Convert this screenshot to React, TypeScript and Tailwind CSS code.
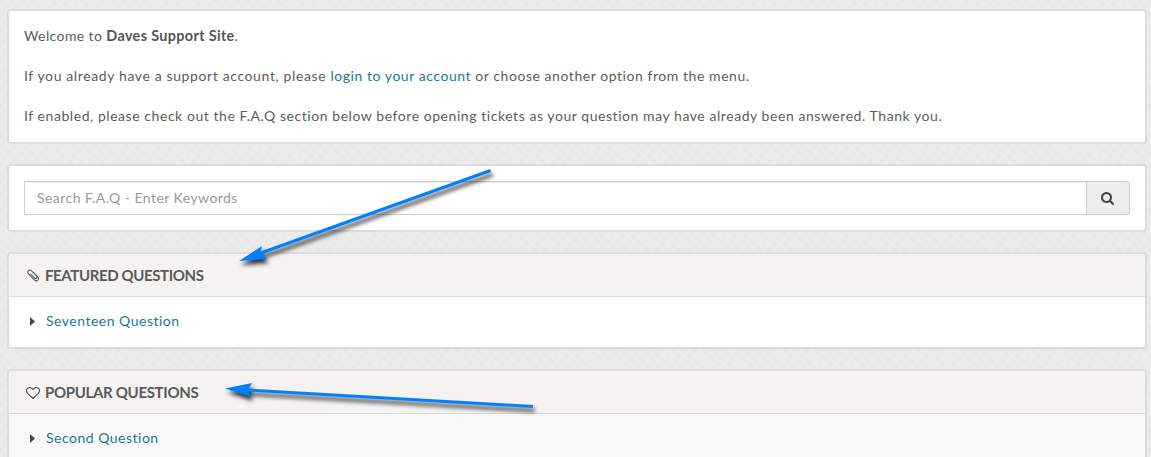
import React from "react";

const panel = "rounded-[4px] border-2 border-[#dcdcdc] bg-white";
const grain =
  "bg-[repeating-linear-gradient(43deg,#ffffff18_0_2px,transparent_4px_7px),repeating-linear-gradient(-53deg,#ffffff18_0_2px,transparent_4px_9px)]";

function Search() {
  return (
    <svg viewBox="0 0 1792 1792" className="-mt-px h-[14px] w-[14px]" fill="#444">
      <path d="M1152 832q0-185-131.5-316.5t-316.5-131.5-316.5 131.5-131.5 316.5 131.5 316.5 316.5 131.5 316.5-131.5 131.5-316.5zm512 832q0 52-38 90t-90 38q-54 0-90-38l-343-342q-179 124-399 124-143 0-273.5-55.5t-225-150-150-225-55.5-273.5 55.5-273.5 150-225 225-150 273.5-55.5 273.5 55.5 225 150 150 225 55.5 273.5q0 220-124 399l343 343q37 37 37 90z" />
    </svg>
  );
}

function Clip() {
  return (
    <svg viewBox="0 0 12 13" className="ml-[2px] mt-px h-[13px] w-[12px]" fill="none" stroke="#555" strokeWidth="1.05" strokeLinecap="round">
      <path d="M5.2 2.3 10.5 7.7C12.7 10.3 10 13.2 7.5 11L1.5 4.9C-.4 2.6 2.2-.2 4.4 1.7L9.4 6.8C10.9 8.6 9 10.3 7.6 9L3.7 5" />
    </svg>
  );
}

function Heart() {
  return (
    <svg viewBox="0 0 14 14" className="ml-px mt-px h-[14px] w-[14px]" fill="none" stroke="#505050" strokeWidth="1.1" strokeLinejoin="round">
      <path d="M7 12.5 1.9 7.6C-.8 4.8.6 1.5 3.8 1.5 5.5 1.5 6.5 2.8 7 3.4 7.5 2.8 8.5 1.5 10.2 1.5 13.4 1.5 14.8 4.8 12.1 7.6Z" />
    </svg>
  );
}

function Section({ icon, title, titleClass, question, body }: {
  icon: React.ReactNode;
  title: string;
  titleClass: string;
  question: string;
  body: string;
}) {
  return (
    <section className={`${panel} mb-[20px] overflow-hidden`}>
      <h2 className="flex h-[43px] items-center border-b border-[#dcdcdc] bg-[#f4f3f2] pl-4 text-[15px] font-bold text-[#5a5a5a]">
        <span className="flex w-5 shrink-0">{icon}</span>
        <span className={titleClass}>{title}</span>
      </h2>
      <div className={`flex h-[50px] items-center pb-px pl-[21px] ${body}`}>
        <svg viewBox="0 0 5 9" className="mr-[11px] h-[9px] w-[5px]" fill="#4c4448"><path d="M0 0 5 4.5 0 9Z" /></svg>
        <a className="-mt-px tracking-[0.5px] text-[#187a94]">{question}</a>
      </div>
    </section>
  );
}

function Arrow({ points, line }: { points: string; line: [number, number, number, number] }) {
  return (
    <g fill="#0080ff" stroke="#0080ff">
      <line x1={line[0]} y1={line[1]} x2={line[2]} y2={line[3]} strokeWidth="3" />
      <polygon points={points} stroke="none" />
    </g>
  );
}

export default function App() {
  return (
    <main className={`relative h-[457px] overflow-hidden bg-[#e9e9e9] pt-[9px] pr-[4px] pl-[7px] font-['Lato','Open_Sans',sans-serif] text-[14px] leading-5 text-[#5c5c5c] ${grain}`}>
      <section className={`${panel} mb-[20px] flex h-[135px] flex-col gap-5 pt-[15px] pl-[15px] tracking-[0.555px] whitespace-nowrap`}>
        <p className="tracking-[0.4px]">Welcome to <strong className="text-[14.4px] tracking-[0.35px] text-[#555]">Daves Support Site</strong>.</p>
        <p><span className="tracking-[0.62px]">If you already have a support account, please </span><a className="text-[#187a94]">login to your account</a> or choose another option from the menu.</p>
        <p>If enabled, please check out the F.A.Q section below before opening tickets as your question may have already been answered. Thank you.</p>
      </section>
      <section className={`${panel} mb-[20px] flex h-[68px] px-[15px] pt-[15px]`}>
        <div className="flex h-[34px] flex-1 items-center border border-[#ccc] pl-3 tracking-[0.45px] text-[#999] shadow-[inset_0_1px_1px_rgba(0,0,0,0.075)]">Search F.A.Q - Enter Keywords</div>
        <button className="flex h-[34px] w-[43px] items-center justify-center rounded-r-[4px] border border-l-0 border-[#ccc] bg-[#eee]" aria-label="Search"><Search /></button>
      </section>
      <Section icon={<Clip />} title="FEATURED QUESTIONS" titleClass="tracking-[-0.38px]" question="Seventeen Question" body="bg-white" />
      <Section icon={<Heart />} title="POPULAR QUESTIONS" titleClass="tracking-[-0.32px]" question="Second Question" body="bg-[#f9f9f9]" />
      <svg className="pointer-events-none absolute inset-0 h-[457px] w-[1151px] drop-shadow-[2px_4px_2px_rgba(0,0,0,0.8)]" viewBox="0 0 1151 457">
        <Arrow line={[490.5, 170.5, 258, 254]} points="239,261 262,246 260.5,253 267,259" />
        <Arrow line={[533, 406.5, 247, 390]} points="225,388.5 252,383 248,390 251,397" />
      </svg>
    </main>
  );
}
